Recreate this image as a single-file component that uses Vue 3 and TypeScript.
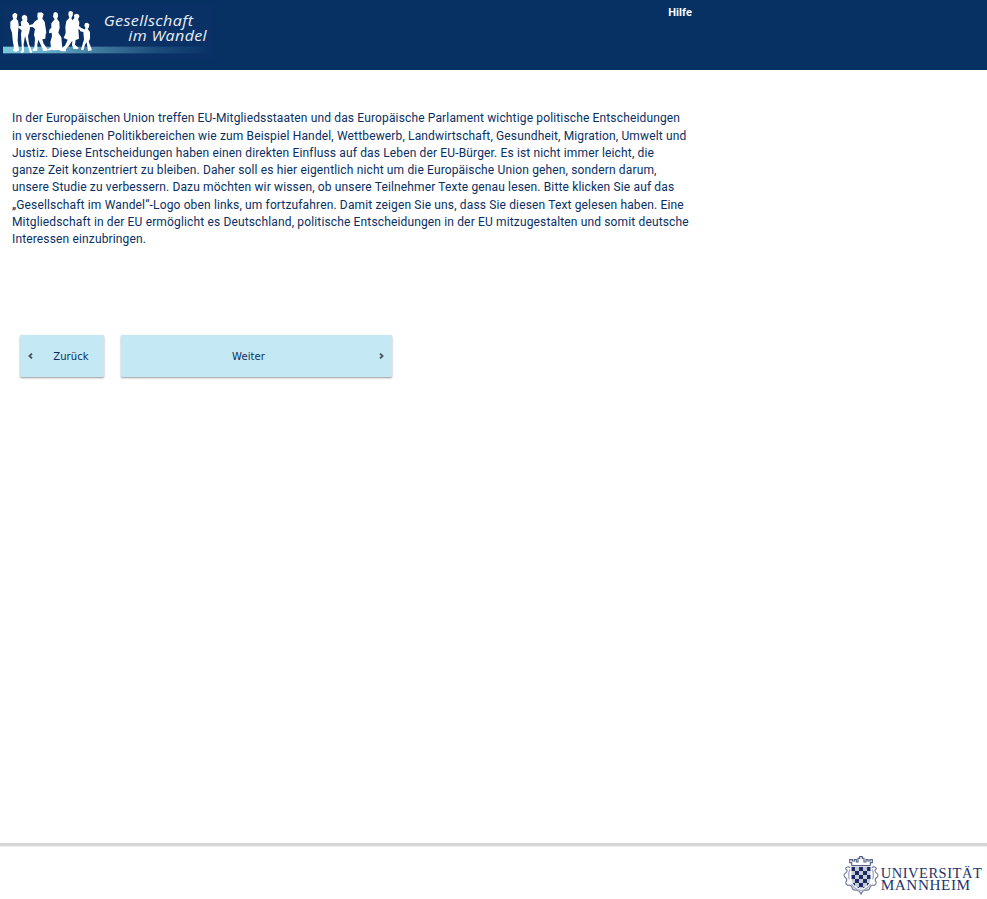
<script setup lang="ts">
const lines: string[] = [
  'In der Europäischen Union treffen EU-Mitgliedsstaaten und das Europäische Parlament wichtige politische Entscheidungen',
  'in verschiedenen Politikbereichen wie zum Beispiel Handel, Wettbewerb, Landwirtschaft, Gesundheit, Migration, Umwelt und',
  'Justiz. Diese Entscheidungen haben einen direkten Einfluss auf das Leben der EU-Bürger. Es ist nicht immer leicht, die',
  'ganze Zeit konzentriert zu bleiben. Daher soll es hier eigentlich nicht um die Europäische Union gehen, sondern darum,',
  'unsere Studie zu verbessern. Dazu möchten wir wissen, ob unsere Teilnehmer Texte genau lesen. Bitte klicken Sie auf das',
  '„Gesellschaft im Wandel“-Logo oben links, um fortzufahren. Damit zeigen Sie uns, dass Sie diesen Text gelesen haben. Eine',
  'Mitgliedschaft in der EU ermöglicht es Deutschland, politische Entscheidungen in der EU mitzugestalten und somit deutsche',
  'Interessen einzubringen.',
]

// Dark cells of the chequered shield
const cell = 12
const cells: { x: number; y: number }[] = []
for (let r = 0; r < 6; r++) {
  for (let c = 0; c < 5; c++) {
    if ((r + c) % 2 === 0) cells.push({ x: 48 + c * cell, y: 87 + r * cell })
  }
}
</script>

<template>
  <div class="page">
    <header class="top">
      <a class="brand" href="#" aria-label="Gesellschaft im Wandel">
        <svg width="220" height="70" viewBox="0 0 660 210">
          <defs>
            <linearGradient id="band" x1="0" x2="1" y1="0" y2="0">
              <stop offset="0" stop-color="#7cc8dc" />
              <stop offset="0.2" stop-color="#68afca" />
              <stop offset="0.45" stop-color="#427c9f" />
              <stop offset="0.75" stop-color="#1b4b7a" />
              <stop offset="1" stop-color="#0a3367" />
            </linearGradient>
          </defs>
          <rect x="9" y="12" width="630" height="168" fill="#0a3166" />
          <rect x="9" y="140" width="620" height="20" fill="url(#band)" />
          <g fill="#fff">
            <path d="M38 43L45 38L52 43L51 52L49 56L54 62L56 74L54 98L53 122L57 151L50 155L40 154L39 149L42 145L38 120L36 98L31 84L31 65L40 57L37 49Z" />
            <path d="M67 47L74 44L81 49L82 58L81 65L86 69L90 84L87 99L84 108L87 132L97 157L90 159L80 126L75 108L71 132L72 155L66 160L62 157L66 149L64 123L63 102L65 91L55 83L55 77L64 79L62 66L68 61L65 54Z" />
            <path d="M113 38L124 37L131 42L129 49L127 56L134 65L139 98L137 103L136 116L127 118L131 131L144 149L140 153L129 153L127 145L115 119L112 134L112 152L99 153L97 149L103 143L105 116L102 104L105 87L98 81L85 82L85 76L98 73L105 64L114 58L112 49Z" />
            <path d="M161 38L168 36L174 41L174 50L171 56L178 66L179 84L175 98L184 112L187 146L198 150L198 154L184 154L177 150L161 151L154 149L146 152L144 148L153 141L151 127L156 108L155 98L147 100L148 89L154 83L154 70L164 58L159 50Z" />
            <path d="M206 35L213 33L219 37L218 47L214 54L218 63L219 92L216 119L207 136L195 151L185 151L183 146L195 137L203 119L191 114L197 99L196 81L199 63L208 53L205 44Z" />
            <path d="M222 44L229 41L237 44L238 50L234 57L238 67L237 78L244 84L253 88L253 94L244 93L235 87L237 116L227 120L225 134L236 144L232 148L220 146L216 136L217 122L205 139L194 151L184 152L188 145L199 132L207 115L212 85L215 62L223 55Z" />
            <path d="M255 70L262 68L268 73L267 82L263 87L270 96L270 117L266 124L276 151L264 153L260 127L255 134L250 151L243 150L248 132L252 119L250 96L241 94L239 88L251 90L257 85L253 77Z" />
          </g>
          <g class="brand-text">
            <text x="311" y="77" textLength="269" lengthAdjust="spacingAndGlyphs">Gesellschaft</text>
            <text x="385" y="124" textLength="236" lengthAdjust="spacingAndGlyphs">im Wandel</text>
          </g>
        </svg>
      </a>
      <a class="help" href="#">Hilfe</a>
    </header>

    <main class="content">
      <p class="copy">
        <span v-for="line in lines" :key="line" class="line">{{ line }}</span>
      </p>
      <nav class="actions">
        <button class="btn back" type="button">
          <svg class="chev" width="5" height="6" viewBox="0 0 5 6"><path d="M4 .5L1.4 3L4 5.5" /></svg>
          <span>Zurück</span>
        </button>
        <button class="btn next" type="button">
          <span>Weiter</span>
          <svg class="chev" width="5" height="6" viewBox="0 0 5 6"><path d="M1 .5L3.6 3L1 5.5" /></svg>
        </button>
      </nav>
    </main>

    <footer class="bottom">
      <svg width="152" height="53" viewBox="0 24 456 159">
        <defs>
          <clipPath id="shield"><path d="M49 87H107V124Q105 144 78 153Q51 144 49 124Z" /></clipPath>
        </defs>
        <g fill="none" stroke="#747d9d" stroke-width="3.5">
          <path d="M50 83V74H44V65H52V69H58V65H64V72H69V61H74V56H82V61H87V72H93V65H99V69H105V65H112V74H106V83M50 83H106" stroke="#59638b" />
          <path d="M46 88Q34 84 32 92Q40 98 33 104Q24 108 29 117Q36 120 35 128Q29 137 38 142Q48 139 51 148Q53 158 64 156Q73 157 78 168Q83 157 92 156Q103 158 105 148Q108 139 118 142Q127 137 121 128Q120 120 127 117Q132 108 123 104Q116 98 124 92Q122 84 110 88" />
          <path d="M45 94Q38 108 43 124M111 94Q118 108 113 124M49 138Q58 154 78 158Q98 154 107 138" stroke="#a5abc0" stroke-width="4" />
        </g>
        <g clip-path="url(#shield)">
          <rect x="48" y="87" width="60" height="68" fill="#c5cad9" />
          <rect v-for="c in cells" :key="`${c.x}-${c.y}`" :x="c.x" :y="c.y" :width="cell" :height="cell" fill="#1e2b63" />
        </g>
        <g class="uni-text">
          <text x="137" y="119" textLength="305" lengthAdjust="spacingAndGlyphs">UNIVERSITÄT</text>
          <text x="137" y="155" textLength="270" lengthAdjust="spacingAndGlyphs">MANNHEIM</text>
        </g>
      </svg>
    </footer>
  </div>
</template>

<style>
body {
  margin: 0;
  background: #fff;
}
</style>

<style scoped>
.page {
  display: flex;
  flex-direction: column;
  height: 899px;
  overflow: hidden;
  font-family: Roboto, "Liberation Sans", sans-serif;
  color: #082f63;
}
.top {
  display: flex;
  justify-content: space-between;
  box-sizing: border-box;
  height: 70px;
  padding-right: 295px;
  background: #083163;
}
.brand,
.brand svg {
  display: block;
}
.brand-text {
  font: italic 46px "Open Sans", "Noto Sans", sans-serif;
  letter-spacing: 1px;
  fill: #e9eef5;
}
.help {
  margin-top: 6px;
  font-size: 11px;
  line-height: 14px;
  font-weight: 700;
  letter-spacing: 0.1px;
  color: #fff;
  text-decoration: none;
}
.content {
  flex: 1;
  padding: 40px 12px 0;
}
.copy {
  margin: 0;
  padding-top: 0.35px;
  font-size: 12px;
  line-height: 17.25px;
  letter-spacing: 0.146px;
}
.line {
  display: block;
  white-space: nowrap;
}
.actions {
  display: flex;
  gap: 17px;
  padding: 86.7px 8px 0;
}
.btn {
  display: flex;
  align-items: center;
  box-sizing: border-box;
  height: 42px;
  padding: 0 8px;
  border: 0;
  border-radius: 1px;
  background: #c5e9f4;
  box-shadow: 0 1px 2px rgba(0, 0, 0, 0.4);
  font: 10px "DejaVu Sans", sans-serif;
  letter-spacing: 0.1px;
  color: #082f63;
}
.btn span {
  flex: 1;
  text-align: center;
}
.back {
  width: 84px;
}
.back span {
  padding-left: 13px;
}
.next {
  width: 271px;
}
.next span {
  padding-right: 11px;
}
.chev {
  fill: none;
  stroke: #4b5964;
  stroke-width: 1.8;
}
.bottom {
  display: flex;
  justify-content: flex-end;
  box-sizing: border-box;
  height: 56px;
  border-top: 3px solid #d6d6d6;
  box-shadow: 0 1px 1px #eee inset;
}
.uni-text {
  font: 41px "Liberation Serif", serif;
  letter-spacing: 1.5px;
  fill: #26336a;
}
</style>
